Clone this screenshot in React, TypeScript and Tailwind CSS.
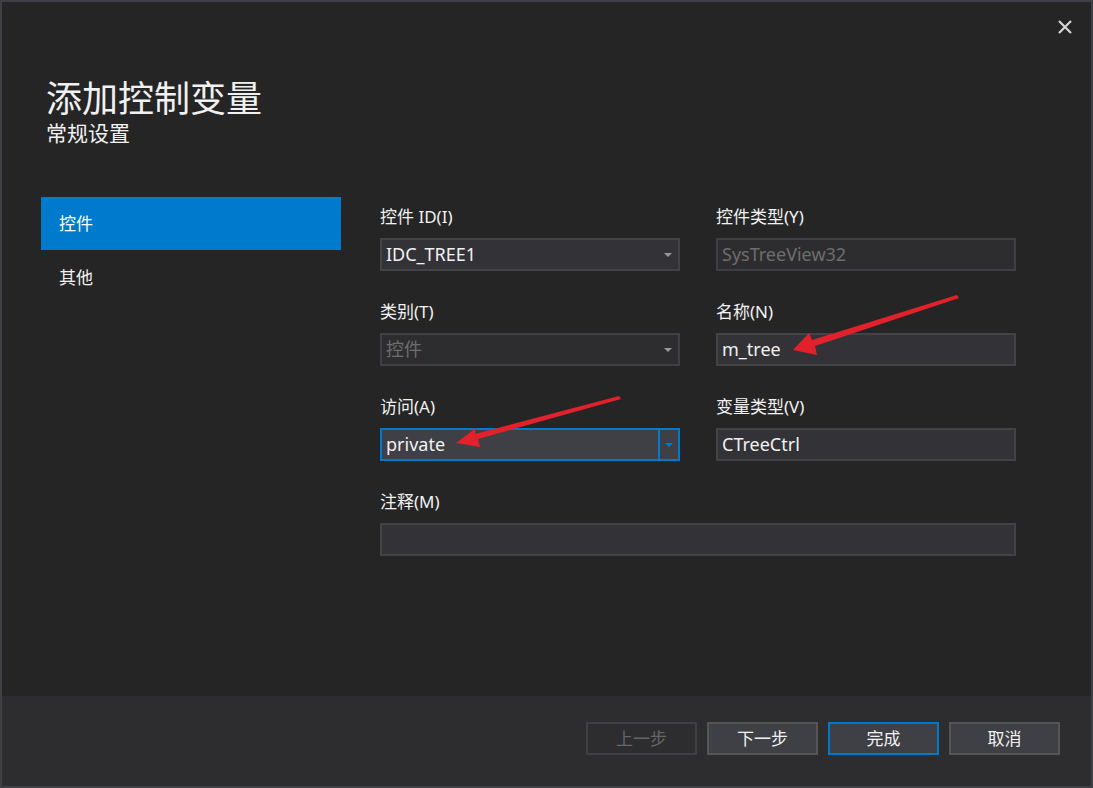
import React from "react";

const font = { fontFamily: '"Noto Sans", "Noto Sans CJK SC", sans-serif' };

const Arrow = function () {
  return (
    <div className="w-[7px] h-0 border-l-[4px] border-r-[4px] border-t-[4px] border-l-transparent border-r-transparent border-t-[#999999]"></div>
  );
};

const Field = function ({
  label,
  value,
  disabled,
  combo,
  focused,
  wide,
}: {
  label: string;
  value?: string;
  disabled?: boolean;
  combo?: boolean;
  focused?: boolean;
  wide?: boolean;
}) {
  const box = focused
    ? "border-2 border-[#007acc] bg-[#3f3f46]"
    : disabled
    ? "border-2 border-[#3f3f46] bg-[#2d2d30] text-[#6d6d6d]"
    : "border-2 border-[#434346] bg-[#333337] text-[#f1f1f1]";
  return (
    <div className={wide ? "col-span-2" : ""}>
      <div className="h-[24px] leading-[24px] text-[17px] text-[#f1f1f1] mb-[9px]">{label}</div>
      <div className={"h-[33px] flex items-center " + box}>
        <div className="flex-1 pl-[4px] text-[18px] leading-[29px] text-[#f1f1f1]">
          <span className={disabled ? "text-[#6d6d6d]" : ""}>{value}</span>
        </div>
        {combo && !focused && (
          <div className="w-[20px] flex justify-center">
            <Arrow />
          </div>
        )}
        {focused && (
          <div className="w-[20px] h-full border-l-2 border-[#007acc] flex justify-center items-center">
            <div className="w-[7px] h-0 border-l-[4px] border-r-[4px] border-t-[4px] border-l-transparent border-r-transparent border-t-[#007acc]"></div>
          </div>
        )}
      </div>
    </div>
  );
};

const Button = function ({ text, kind }: { text: string; kind?: string }) {
  const cls =
    kind === "disabled"
      ? "bg-[#2d2d30] border-[#3f3f46] text-[#656565]"
      : kind === "primary"
      ? "bg-[#3f3f46] border-[#007acc] text-[#f1f1f1]"
      : "bg-[#3f3f46] border-[#555555] text-[#f1f1f1]";
  return (
    <div className={"w-[111px] h-[33px] border-2 flex items-center justify-center text-[17px] " + cls}>
      {text}
    </div>
  );
};

export default function App() {
  return (
    <div className="relative w-[1093px] h-[788px]" style={font}>
      <div className="w-full h-full border-2 border-[#3f3f46] bg-[#252526] flex flex-col text-[#f1f1f1]">
        <div className="h-[195px] pl-[44px] pt-[77px] relative">
          <button className="absolute right-[18px] top-[17px] w-[16px] h-[16px]">
            <svg viewBox="0 0 16 16" width="16" height="16">
              <path d="M2 2 L14 14 M14 2 L2 14" stroke="#d6d6d6" strokeWidth="2.2" />
            </svg>
          </button>
          <div className="text-[36px] leading-[40px] text-[#f1f1f1]">添加控制变量</div>
          <div className="text-[21px] leading-[28px] text-[#f1f1f1]">常规设置</div>
        </div>

        <div className="flex flex-1">
          <div className="w-[300px] ml-[39px] flex flex-col">
            <div className="h-[53px] bg-[#007acc] pl-[18px] flex items-center text-[17px] text-white">控件</div>
            <div className="h-[56px] pl-[18px] flex items-center text-[17px] text-[#f1f1f1]">其他</div>
          </div>
          <div className="ml-[39px] pt-[8px] w-[636px] grid grid-cols-[300px_300px] gap-x-[36px] gap-y-[29px] content-start">
            <Field label="控件 ID(I)" value="IDC_TREE1" combo />
            <Field label="控件类型(Y)" value="SysTreeView32" disabled />
            <Field label="类别(T)" value="控件" combo disabled />
            <Field label="名称(N)" value="m_tree" />
            <Field label="访问(A)" value="private" combo focused />
            <Field label="变量类型(V)" value="CTreeCtrl" />
            <Field label="注释(M)" value="" wide />
          </div>
        </div>

        <div className="h-[90px] bg-[#2d2d30] flex justify-end items-start pt-[26px] pr-[31px] gap-[10px]">
          <Button text="上一步" kind="disabled" />
          <Button text="下一步" />
          <Button text="完成" kind="primary" />
          <Button text="取消" />
        </div>
      </div>

      <svg className="absolute top-0 left-0 pointer-events-none" width="1093" height="788" viewBox="0 0 1093 788">
        <polygon
          points="957,295 959,298 815,346 817,355 793,350 809,333 812,340"
          fill="#e3212b"
        />
        <polygon
          points="619,396 621,399 478,439 480,447 456,443 476,428 475,434"
          fill="#e3212b"
        />
      </svg>
    </div>
  );
}
